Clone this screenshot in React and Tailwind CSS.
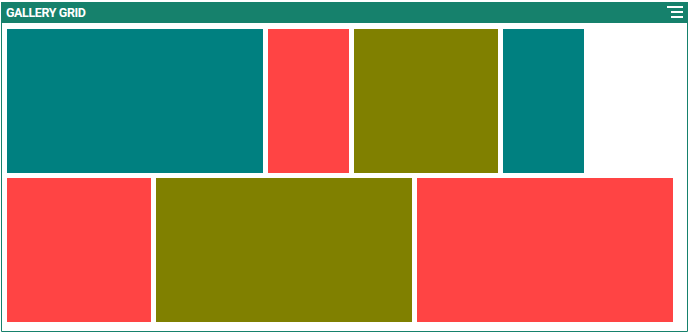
import React from 'react';

const tiles = [
  { w: 'w-[256px]', c: 'bg-[#008080]' },
  { w: 'w-[81px]', c: 'bg-[#ff4444]' },
  { w: 'w-[144px]', c: 'bg-[#808000]' },
  { w: 'w-[81px]', c: 'bg-[#008080]' },
  { w: 'w-[144px]', c: 'bg-[#ff4444]' },
  { w: 'w-[256px]', c: 'bg-[#808000]' },
  { w: 'w-[256px]', c: 'bg-[#ff4444]' },
];

const App = () => {
  return (
    <div className="w-[691px] h-[335px] bg-white pt-[2px] pl-[1px]" style={{ fontFamily: 'Roboto, "Liberation Sans", sans-serif' }}>
      <div className="w-[687px] h-[330px] border border-[#16816c] rounded-t-[3px] flex flex-col">
        {/* Header */}
        <div className="h-[21px] bg-[#16816c] flex items-center justify-between pl-[5px] pr-[5px] -mt-px -mx-px">
          <span className="text-white text-[12.5px] font-bold leading-none tracking-[-0.4px] pt-[2px]">GALLERY GRID</span>
          <div className="flex flex-col items-end gap-[3px] mt-[-1px]">
            <div className="w-[16px] h-[2px] bg-white"></div>
            <div className="w-[12px] h-[2px] bg-white"></div>
            <div className="w-[12px] h-[2px] bg-white"></div>
          </div>
        </div>

        {/* Tiles */}
        <div className="flex flex-wrap gap-[5px] pt-[6px] pl-[5px] pr-[5px]">
          {tiles.map((t, i) => (
            <div key={i} className={`h-[144px] ${t.w} ${t.c}`}></div>
          ))}
        </div>
      </div>
    </div>
  );
};

export default App;
